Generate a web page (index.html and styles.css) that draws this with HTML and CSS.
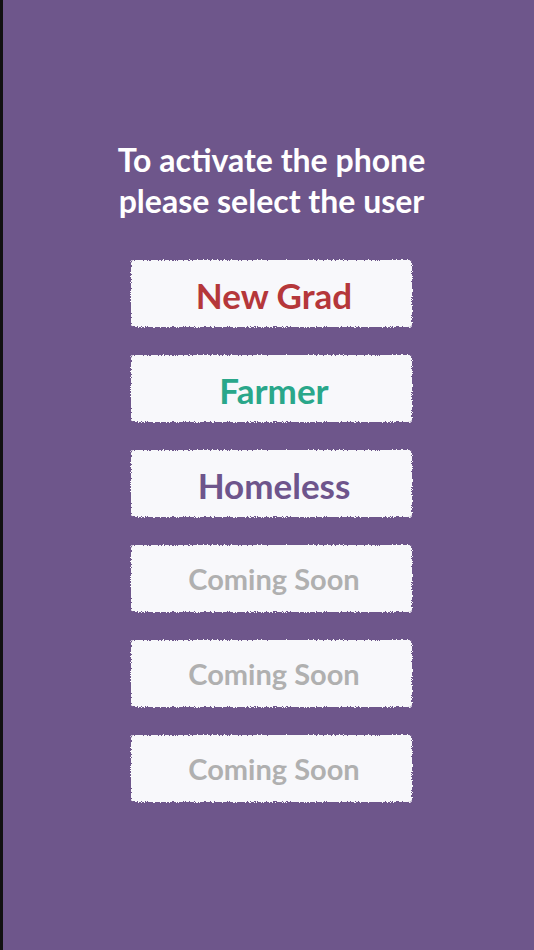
FILE: index.html
```html
<!DOCTYPE html>
<html>
<head>
<meta charset="utf-8">
<link rel="stylesheet" href="styles.css">
</head>
<body>
<svg class="defs" width="0" height="0" aria-hidden="true">
  <filter id="rough" x="-5%" y="-10%" width="110%" height="120%">
    <feTurbulence type="fractalNoise" baseFrequency="1.2" numOctaves="2" seed="3" result="noise"/>
    <feDisplacementMap in="SourceGraphic" in2="noise" scale="4" xChannelSelector="R" yChannelSelector="G"/>
  </filter>
</svg>
<main class="screen">
  <h1 class="title">To activate the phone<br>please select the user</h1>
  <div class="users">
    <button class="user user-grad">New Grad</button>
    <button class="user user-farmer">Farmer</button>
    <button class="user user-homeless">Homeless</button>
    <button class="user user-soon">Coming Soon</button>
    <button class="user user-soon">Coming Soon</button>
    <button class="user user-soon">Coming Soon</button>
  </div>
</main>
</body>
</html>
```
FILE: styles.css
```css
html, body {
  margin: 0;
  padding: 0;
  height: 100%;
}
body {
  background: #6e568b;
  border-left: 3px solid #111;
  box-sizing: border-box;
  font-family: Lato, "Open Sans", sans-serif;
}
.defs {
  position: absolute;
  width: 0;
  height: 0;
}
.screen {
  display: flex;
  flex-direction: column;
  align-items: center;
  padding: 139px 0 0 6px;
}
.title {
  margin: 0;
  color: #ffffff;
  font-size: 32px;
  font-weight: 700;
  line-height: 41px;
  text-align: center;
}
.users {
  display: flex;
  flex-direction: column;
  gap: 28px;
  margin-top: 39px;
}
.user {
  position: relative;
  width: 281px;
  height: 67px;
  border: 0;
  padding: 2px 0 0 5px;
  background: transparent;
  font-family: Lato, "Open Sans", sans-serif;
  font-weight: 700;
  font-size: 35px;
  text-align: center;
  z-index: 0;
}
.user::before {
  content: "";
  position: absolute;
  inset: 0;
  background: #f8f8fb;
  border-radius: 3px;
  filter: url(#rough);
  z-index: -1;
}
.user-grad { color: #b5373a; }
.user-farmer { color: #2aa78a; }
.user-homeless { color: #6e558c; }
.user-soon {
  color: #b0b0b0;
  font-size: 29px;
  padding-top: 0;
}
```
